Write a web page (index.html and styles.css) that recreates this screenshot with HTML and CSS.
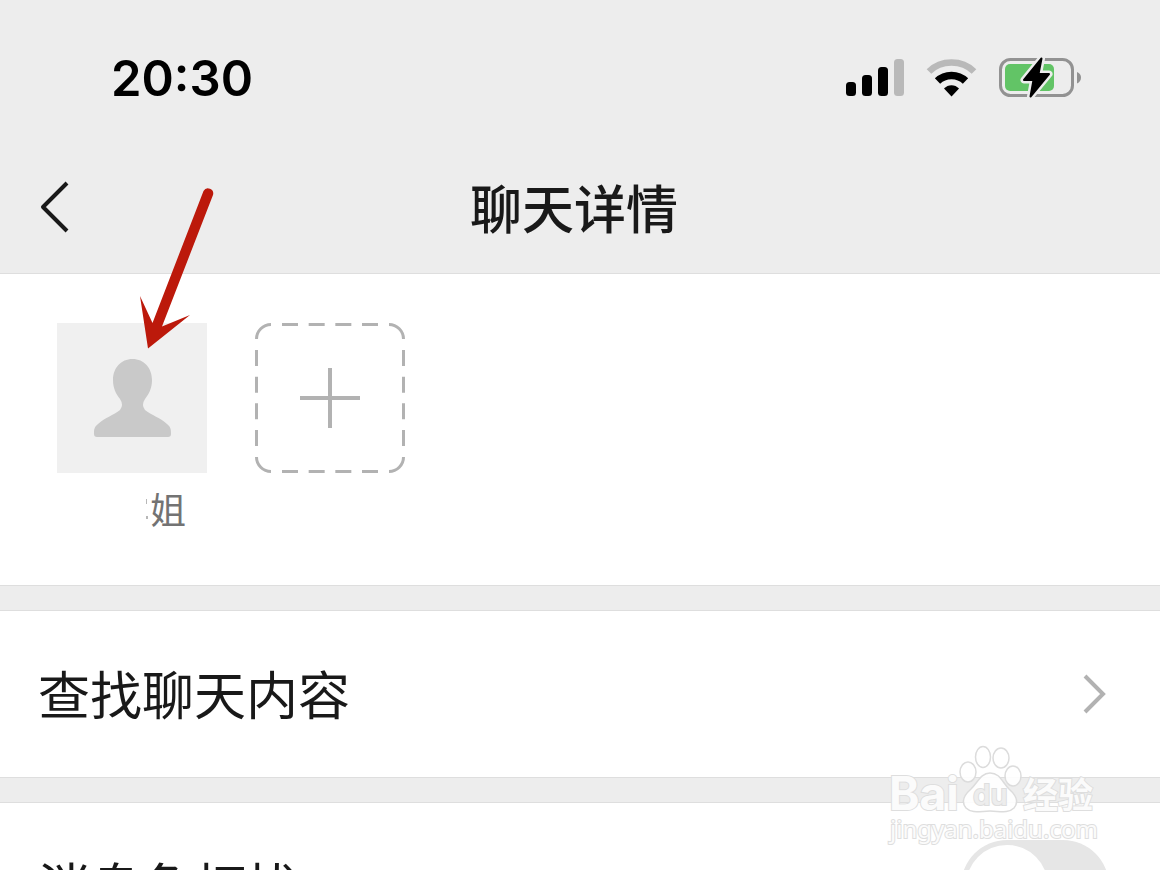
FILE: index.html
```html
<!DOCTYPE html>
<html lang="zh-CN">
<head>
    <meta charset="UTF-8">
    <meta name="viewport" content="width=device-width, initial-scale=1.0">
    <title>聊天详情</title>
    <link rel="stylesheet" href="styles.css">
</head>
<body>

    <!-- Status Bar -->
    <div class="status-bar">
        <span class="time">20:30</span>
        <div class="status-icons">
            <svg width="58" height="42" viewBox="0 0 58 42" aria-hidden="true">
                <rect x="0" y="25" width="10" height="14" rx="3.500"/>
                <rect x="16" y="18" width="10" height="21" rx="3.500"/>
                <rect x="32" y="10" width="10" height="29" rx="3.500"/>
                <rect x="48" y="2" width="10" height="37" rx="3.500" fill="#b9b9b9"/>
            </svg>
            <svg width="51" height="42" viewBox="0 0 51 42" aria-hidden="true">
                <path d="M3 14.500C15 2.500 36 2.500 48 14.500" fill="none" stroke="#b9b9b9" stroke-width="6.500"/>
                <path d="M11.500 24C19 16.500 32 16.500 39.500 24" fill="none" stroke="#000" stroke-width="7.500"/>
                <path d="M18 31.500C22 27 29 27 33 31.500L25.500 39.500Z"/>
            </svg>
            <svg width="82" height="42" viewBox="0 0 82 42" aria-hidden="true">
                <rect x="1.500" y="2.500" width="72" height="36" rx="10" fill="none" stroke="#929292" stroke-width="3"/>
                <path d="M78 15Q82 16.500 82 20.500T78 26.500Z" fill="#929292"/>
                <rect x="6" y="7" width="49" height="27" rx="5" fill="#62c466"/>
                <path d="M42.500 1.500L25 23H34.500L31.500 39.500L50 17H39.500Z" fill="#000" stroke="#ededed" stroke-width="7" stroke-linejoin="round" paint-order="stroke"/>
                <path d="M42.500 1.500L25 23H34.500L31.500 39.500L50 17H39.500Z" stroke="#000" stroke-width="2" stroke-linejoin="round"/>
            </svg>
        </div>
    </div>

    <!-- Title Bar -->
    <header class="nav-bar">
        <button type="button" class="btn-back" aria-label="返回">
            <svg width="30" height="52" viewBox="0 0 30 52" fill="none" stroke="#191919" stroke-width="4">
                <path d="M27 2L3 26L27 50" stroke-linejoin="round"/>
            </svg>
        </button>
        <h1>聊天详情</h1>
    </header>

    <main>
        <!-- Chat Members -->
        <section class="members">
            <a href="#" class="member">
                <svg class="avatar" width="150" height="150" viewBox="0 0 150 150" aria-hidden="true">
                    <rect width="150" height="150" fill="#f0f0f0"/>
                    <path d="M75.500 36C87 36 95 45 95 57C95 65 92 71 88 76Q84 82 88 87C94 92 104 95 110 101C114 104 114 107 114 111Q114 114 111 114H40Q37 114 37 111C37 107 37 104 41 101C47 95 57 92 63 87Q67 82 63 76C59 71 56 65 56 57C56 45 64 36 75.500 36Z" fill="#c9c9c9"/>
                </svg>
                <span class="member-name">
                    <svg width="4" height="24" viewBox="0 0 4 24" fill="#b8b8b8" aria-hidden="true">
                        <rect x="0" y="3" width="1" height="5"/>
                        <rect x="0" y="20" width="2" height="3"/>
                    </svg>姐</span>
            </a>
            <button type="button" class="btn-add" aria-label="添加成员">
                <svg width="150" height="150" viewBox="0 0 150 150" fill="none" stroke="#b2b2b2" stroke-width="3">
                    <path d="M1.500 16A14.500 14.500 0 0 1 16 1.500M134 1.500A14.500 14.500 0 0 1 148.500 16M148.500 134A14.500 14.500 0 0 1 134 148.500M16 148.500A14.500 14.500 0 0 1 1.500 134"/>
                    <path d="M27 1.500H123M148.500 27V123M27 148.500H123M1.500 27V123" stroke-dasharray="16 10.667"/>
                    <path d="M75 45V105M45 75H105" stroke-width="4"/>
                </svg>
            </button>
        </section>

        <!-- Settings -->
        <a href="#" class="row">
            <span class="row-text">查找聊天内容</span>
            <svg class="chevron" width="27" height="40" viewBox="0 0 27 40" fill="none" stroke="#b2b2b2" stroke-width="4" aria-hidden="true">
                <path d="M3 2L21 20L3 38"/>
            </svg>
        </a>
        <div class="row">
            <label for="mute" class="row-text">消息免打扰</label>
            <input type="checkbox" id="mute" class="switch">
        </div>
    </main>

    <!-- Pointer to the avatar -->
    <svg class="arrow" width="76" height="166" viewBox="0 0 76 166" aria-hidden="true">
        <path d="M63.500 6A5.200 5.200 0 0 1 73 10L22 141.500L50 130L8 163.500L0 111L12.500 138Z" fill="#bc190b"/>
    </svg>

    <!-- Watermark -->
    <svg class="watermark" width="220" height="110" viewBox="0 0 220 110">
        <g fill="#fff" fill-opacity="0.900" stroke="#dcdcdc" stroke-width="1.500">
            <ellipse cx="87" cy="31" rx="8" ry="10"/>
            <ellipse cx="102" cy="16" rx="7.500" ry="10.500"/>
            <ellipse cx="120" cy="17" rx="8" ry="10"/>
            <ellipse cx="132" cy="35" rx="8" ry="10"/>
            <path d="M109 32C119 32 121 41 128 48C136 55 138 61 133 67C127 73 118 70 109 70C100 70 91 73 85 67C80 61 82 55 90 48C97 41 100 32 109 32Z"/>
        </g>
        <g class="mark-text">
            <text x="8" y="69" class="mark-brand">Bai</text>
            <text x="92" y="64" class="mark-du">du</text>
            <text x="142" y="67" class="mark-cn">经验</text>
            <text x="9" y="97" class="mark-url">jingyan.baidu.com</text>
        </g>
    </svg>

</body>
</html>
```

FILE: styles.css
```css
/* General Styling */
* {
    box-sizing: border-box;
}

body {
    position: relative;
    height: 100vh;
    margin: 0;
    overflow: hidden;
    background: #ededed;
    color: #191919;
    font-family: "Noto Sans CJK SC", sans-serif;
}

svg {
    display: block;
    flex: none;
}

button {
    padding: 0;
    border: none;
    background: none;
    cursor: pointer;
}

a {
    color: inherit;
    text-decoration: none;
}

/* Status Bar */
.status-bar {
    display: flex;
    align-items: center;
    justify-content: space-between;
    height: 156px;
    padding: 0 79px 0 111px;
}

.time {
    color: #000;
    font-family: Inter, sans-serif;
    font-size: 49px;
    font-weight: 600;
}

.status-icons {
    display: flex;
    gap: 22px;
}

/* Title Bar */
.nav-bar {
    display: grid;
    grid-template-columns: 1fr auto 1fr;
    align-items: center;
    padding: 11px 52px 26px 40px;
}

.btn-back {
    justify-self: start;
}

h1 {
    margin: 0;
    font-size: 52px;
    font-weight: 500;
    line-height: 80px;
}

/* Chat Members */
.members {
    display: flex;
    align-items: flex-start;
    gap: 48px;
    padding: 49px 57px 51px;
    border-top: 1px solid #dedede;
    border-bottom: 1px solid #dedede;
    background: #fff;
}

.member-name {
    display: flex;
    align-items: center;
    justify-content: flex-end;
    padding: 9px 21px 0 0;
    color: #737373;
    font-size: 36px;
    line-height: 52px;
}

/* Settings Rows */
.row {
    display: flex;
    align-items: center;
    justify-content: space-between;
    height: 168px;
    margin-top: 24px;
    padding: 0 51px 0 38px;
    border-top: 1px solid #dedede;
    border-bottom: 1px solid #dedede;
    background: #fff;
    font-size: 52px;
}

.row-text {
    padding-bottom: 4px;
}

.switch {
    appearance: none;
    width: 148px;
    height: 92px;
    margin: 0;
    padding: 5px;
    border-radius: 46px;
    background: #e6e6e6;
    cursor: pointer;
}

.switch::before {
    content: "";
    display: block;
    width: 82px;
    height: 82px;
    border-radius: 50%;
    background: #fff;
}

.switch:checked {
    background: #62c466;
}

.switch:checked::before {
    margin-left: auto;
}

/* Overlays */
.arrow {
    position: absolute;
    top: 185px;
    left: 140px;
    pointer-events: none;
}

.watermark {
    position: absolute;
    right: 59px;
    bottom: 19px;
    pointer-events: none;
}

.mark-text {
    fill: #fbfbfb;
    stroke: #dedede;
    stroke-width: 2px;
    paint-order: stroke;
    font-family: "Noto Sans", sans-serif;
}

.mark-brand {
    font-family: Inter, sans-serif;
    font-size: 46px;
    font-weight: 700;
}

.mark-du {
    fill: #ededed;
    font-family: Inter, sans-serif;
    font-size: 28px;
    font-weight: 600;
}

.mark-cn {
    font-family: "Noto Sans CJK SC", sans-serif;
    font-size: 35px;
    font-weight: 700;
}

.mark-url {
    font-size: 24px;
}
```
